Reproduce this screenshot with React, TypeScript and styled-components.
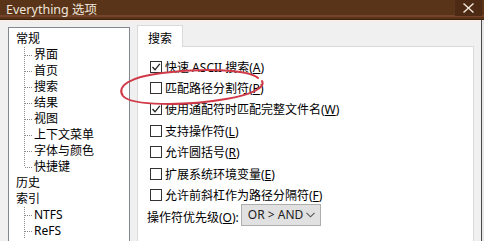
import React from 'react';
import styled, { createGlobalStyle } from 'styled-components';

const Global = createGlobalStyle`
  html, body { margin: 0; padding: 0; background: #f0f0f0; }
  body { font-family: "Noto Sans", "Noto Sans CJK SC", sans-serif; }
`;

const Window = styled.div`
  position: relative;
  width: 484px;
  height: 241px;
  overflow: hidden;
  display: flex;
  flex-direction: column;
  background: #e6e6e6;
  font-size: 12px;
  color: #000;
  font-family: "Noto Sans", "Noto Sans CJK SC", sans-serif;
`;

const TitleBar = styled.div`
  height: 19px;
  flex: none;
  background: linear-gradient(#5a3419 0 15px, #74452a 15px 17px, #5a3419 17px);
  border-bottom: 1px solid #3b2010;
  display: flex;
  align-items: flex-start;
  justify-content: space-between;
  color: #efe4da;
`;

const Title = styled.span`
  padding: 2px 0 0 6px;
  font-size: 12.5px;
  line-height: 16px;
  white-space: nowrap;
`;

const Close = styled.div`
  width: 27px;
  height: 16px;
  margin-right: 2px;
  background: #4d2a13;
  display: flex;
  align-items: center;
  justify-content: center;
`;

const Body = styled.div`
  flex: 1;
  display: flex;
  gap: 7px;
  padding: 5px 7px 0 8px;
  margin-right: 2px;
  border-right: 1px solid #4a4a4a;
  min-height: 0;
  background: linear-gradient(#fbeee4, #f0f0f0 3px);
`;

const Tree = styled.div`
  width: 122px;
  flex: none;
  box-sizing: border-box;
  margin-top: 2px;
  border: 1px solid #828790;
  border-bottom: none;
  background: #fff;
  padding: 3px 0 0 7px;
`;

const TreeRow = styled.div`
  height: 16px;
  line-height: 16px;
  white-space: nowrap;
`;

const dotV = 'repeating-linear-gradient(to bottom, #8c8c8c 0 1px, transparent 1px 2px)';
const dotH = 'repeating-linear-gradient(to right, #8c8c8c 0 1px, transparent 1px 2px)';

const TreeChild = styled.div<{ $last?: boolean }>`
  height: 16px;
  line-height: 16px;
  white-space: nowrap;
  padding-left: 18px;
  background-image: ${dotV}, ${dotH};
  background-repeat: no-repeat;
  background-position: 8px 0, 9px 8px;
  background-size: 1px ${(p) => (p.$last ? '8px' : '100%')}, 8px 1px;
`;

const TabArea = styled.div`
  flex: 1;
  display: flex;
  flex-direction: column;
  min-width: 0;
`;

const TabStrip = styled.div`
  display: flex;
  height: 21px;
  flex: none;
`;

const Tab = styled.div`
  width: 46px;
  height: 22px;
  box-sizing: border-box;
  border: 1px solid #d9d9d9;
  border-bottom: none;
  background: #fff;
  position: relative;
  z-index: 1;
  display: flex;
  justify-content: center;
  padding-top: 5px;
  line-height: 16px;
`;

const Panel = styled.div`
  flex: 1;
  border: 1px solid #d9d9d9;
  border-bottom: none;
  background: #fff;
  padding: 9px 0 0 9px;
  display: flex;
  flex-direction: column;
`;

const CheckRow = styled.div`
  height: 21.4px;
  display: flex;
  align-items: center;
  gap: 3px;
  padding-left: 3px;
  white-space: nowrap;
`;

const Box = styled.span`
  width: 12px;
  height: 12px;
  box-sizing: border-box;
  border: 1px solid #333;
  background: #fff;
  display: flex;
  align-items: center;
  justify-content: center;
  flex: none;
`;

const OptRow = styled.div`
  height: 22px;
  display: flex;
  align-items: center;
  gap: 2px;
  white-space: nowrap;
`;

const Select = styled.div`
  width: 80px;
  height: 22px;
  box-sizing: border-box;
  border: 1px solid #adadad;
  background: #e1e1e1;
  display: flex;
  align-items: center;
  justify-content: space-between;
  padding: 0 5px 0 6px;
  margin-bottom: 4px;
  color: #222;
`;

const Annotation = styled.svg`
  position: absolute;
  left: 0;
  top: 0;
  pointer-events: none;
`;

const Key = styled.u`
  text-underline-offset: 1px;
`;

const Check: React.FC<{ checked?: boolean; children: React.ReactNode }> = ({ checked, children }) => (
  <CheckRow>
    <Box>
      {checked && (
        <svg width="10" height="10" viewBox="0 0 10 10">
          <polyline points="1.5,5 4,7.8 8.8,1.8" fill="none" stroke="#222" strokeWidth="1.3" />
        </svg>
      )}
    </Box>
    <span>{children}</span>
  </CheckRow>
);

export default function App() {
  return (
    <>
      <Global />
      <Window>
        <TitleBar>
          <Title>Everything 选项</Title>
          <Close>
            <svg width="11" height="10" viewBox="0 0 11 10">
              <path d="M0.5 0.5 L10.5 9.5 M10.5 0.5 L0.5 9.5" stroke="#f3e6da" strokeWidth="1.4" />
            </svg>
          </Close>
        </TitleBar>
        <Body>
          <Tree>
            <TreeRow>常规</TreeRow>
            <TreeChild>界面</TreeChild>
            <TreeChild>首页</TreeChild>
            <TreeChild>搜索</TreeChild>
            <TreeChild>结果</TreeChild>
            <TreeChild>视图</TreeChild>
            <TreeChild>上下文菜单</TreeChild>
            <TreeChild>字体与颜色</TreeChild>
            <TreeChild $last>快捷键</TreeChild>
            <TreeRow>历史</TreeRow>
            <TreeRow>索引</TreeRow>
            <TreeChild>NTFS</TreeChild>
            <TreeChild>ReFS</TreeChild>
          </Tree>
          <TabArea>
            <TabStrip>
              <Tab>搜索</Tab>
            </TabStrip>
            <Panel>
              <Check checked>快速 ASCII 搜索(<Key>A</Key>)</Check>
              <Check>匹配路径分割符(<Key>P</Key>)</Check>
              <Check checked>使用通配符时匹配完整文件名(<Key>W</Key>)</Check>
              <Check>支持操作符(<Key>L</Key>)</Check>
              <Check>允许圆括号(<Key>R</Key>)</Check>
              <Check>扩展系统环境变量(<Key>E</Key>)</Check>
              <Check>允许前斜杠作为路径分隔符(<Key>F</Key>)</Check>
              <OptRow>
                <span>操作符优先级(<Key>O</Key>):</span>
                <Select>
                  <span>OR &gt; AND</span>
                  <svg width="9" height="6" viewBox="0 0 9 6">
                    <polyline points="0.5,0.8 4.5,4.8 8.5,0.8" fill="none" stroke="#555" strokeWidth="1.1" />
                  </svg>
                </Select>
              </OptRow>
            </Panel>
          </TabArea>
        </Body>
        <Annotation width="484" height="241" viewBox="0 0 484 241">
          <path
            d="M 258 78 C 248 69, 200 68, 162 73 C 130 77, 116 86, 123 96 C 131 106, 186 106, 226 99 C 250 95, 266 88, 262 81"
            fill="none"
            stroke="#d03a48"
            strokeWidth="2"
            strokeLinecap="round"
          />
        </Annotation>
      </Window>
    </>
  );
}
